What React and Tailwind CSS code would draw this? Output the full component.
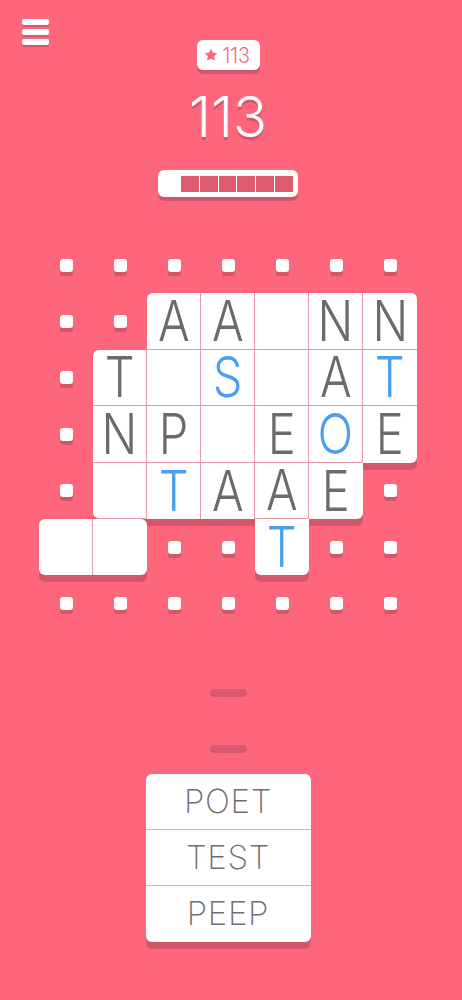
import clsx from 'clsx';

const BOARD = [
  '.......',
  '..AA_NN',
  '.T_s_At',
  '.NP_EoE',
  '._tAAE.',
  '##..t..',
  '.......',
];

const WORDS = ['POET', 'TEST', 'PEEP'];

function isTile(r, c) {
  if (r < 0 || r >= 7 || c < 0 || c >= 7) return false;
  return BOARD[r][c] !== '.';
}

function pieceOf(r, c) {
  return BOARD[r][c] === '#' ? 'b' : 'a';
}

function joined(r, c, r2, c2) {
  return isTile(r2, c2) && pieceOf(r, c) === pieceOf(r2, c2);
}

function Cell({ r, c }) {
  const ch = BOARD[r][c];

  if (ch === '.') {
    return (
      <div className="flex items-center justify-center">
        <div className="h-[13px] w-[13px] rounded-[3px] bg-white shadow-[0_4px_0_#d4566a]" />
      </div>
    );
  }

  const up = joined(r, c, r - 1, c);
  const down = joined(r, c, r + 1, c);
  const left = joined(r, c, r, c - 1);
  const right = joined(r, c, r, c + 1);
  const letter = ch === '_' || ch === '#' ? '' : ch.toUpperCase();
  const blue = letter !== '' && ch !== letter;

  return (
    <div
      className={clsx(
        'flex items-center justify-center border-[#e99aa6] bg-white shadow-[0_7px_0_#d4566a]',
        isTile(r, c + 1) && 'border-r',
        isTile(r + 1, c) && 'border-b',
        !up && !left && 'rounded-tl-md',
        !up && !right && 'rounded-tr-md',
        !down && !left && 'rounded-bl-md',
        !down && !right && 'rounded-br-md',
      )}
    >
      <span
        className={clsx(
          'scale-x-[0.84] text-[56px] font-light leading-[44px]',
          blue ? 'text-[#4a9ff0]' : 'text-[#6b6b6b]',
        )}
      >
        {letter}
      </span>
    </div>
  );
}

function MenuIcon() {
  return (
    <div className="absolute left-[22px] top-[19px] flex flex-col gap-1">
      <div className="h-[6px] w-[27px] rounded-[2px] bg-white shadow-[0_2px_0_#d4566a]" />
      <div className="h-[6px] w-[27px] rounded-[2px] bg-white shadow-[0_2px_0_#d4566a]" />
      <div className="h-[6px] w-[27px] rounded-[2px] bg-white shadow-[0_2px_0_#d4566a]" />
    </div>
  );
}

function StarBadge() {
  return (
    <div className="mt-[40px] flex h-[30px] w-[63px] items-center justify-center gap-[3px] rounded-md bg-white shadow-[0_4px_0_#d4566a]">
      <svg width="14" height="14" viewBox="0 0 24 24">
        <path
          d="M12 2.5l2.9 6.1 6.6.8-4.9 4.6 1.3 6.6L12 17.3l-5.9 3.3 1.3-6.6-4.9-4.6 6.6-.8z"
          fill="#fe667c"
          stroke="#fe667c"
          strokeWidth="1.5"
          strokeLinejoin="round"
        />
      </svg>
      <span className="scale-x-[0.9] text-[22px] font-light leading-none text-[#fe667c]">113</span>
    </div>
  );
}

function Progress() {
  return (
    <div className="mt-[25px] flex h-[27px] w-[140px] items-center rounded-md bg-white pl-[23px] pr-[5px] shadow-[0_4px_0_#d4566a]">
      <div className="flex h-4 flex-1 gap-px">
        {[0, 1, 2, 3, 4, 5].map((i) => (
          <div key={i} className="flex-1 bg-[#dc5b6f]" />
        ))}
      </div>
    </div>
  );
}

export default function App() {
  return (
    <div className="relative min-h-[1000px] w-full bg-[#fe667c] font-['Inter',sans-serif]">
      <MenuIcon />

      <div className="flex w-[456px] flex-col items-center">
        <StarBadge />

        <div className="mt-[19px] text-[56px] font-light leading-none text-white [text-shadow:0_3px_0_#d4566a]">
          113
        </div>

        <Progress />

        <div className="mt-[40px] grid grid-cols-[repeat(7,54px)] grid-rows-[repeat(7,56.4px)]">
          {BOARD.map((row, r) =>
            row.split('').map((_, c) => <Cell key={`${r}-${c}`} r={r} c={c} />),
          )}
        </div>

        <div className="mt-[57px] h-2 w-[37px] rounded-full bg-[#d95a6e]" />
        <div className="mt-[48px] h-2 w-[37px] rounded-full bg-[#d95a6e]" />

        <div className="mt-[21px] w-[165px] rounded-md bg-white shadow-[0_7px_0_#d4566a]">
          {WORDS.map((word, i) => (
            <div
              key={word}
              className={clsx(
                'flex h-14 items-center justify-center',
                i < WORDS.length - 1 && 'border-b border-[#f2a5b0]',
              )}
            >
              <span className="text-[33px] font-extralight leading-none tracking-[0.02em] text-[#6f6f6f]">
                {word}
              </span>
            </div>
          ))}
        </div>
      </div>
    </div>
  );
}
